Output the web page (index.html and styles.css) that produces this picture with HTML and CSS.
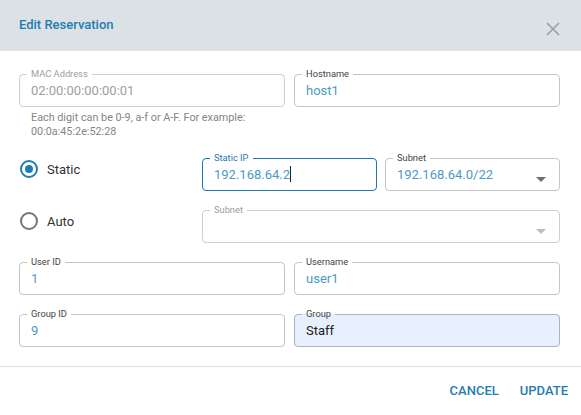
FILE: index.html
```html
<!DOCTYPE html>
<html lang="en">
<head>
  <meta charset="UTF-8">
  <meta name="viewport" content="width=device-width, initial-scale=1.0">
  <title>Edit Reservation</title>
  <link rel="stylesheet" href="styles.css">
</head>
<body>

  <div class="dialog">
    <header class="dialog-header">
      <h2>Edit Reservation</h2>
      <button class="close" aria-label="Close">
        <svg width="14" height="14" viewBox="0 0 14 14">
          <path d="M1 1 L13 13 M13 1 L1 13" stroke="#9a9ea2" stroke-width="1.6" fill="none"/>
        </svg>
      </button>
    </header>

    <div class="dialog-body">
      <!-- MAC / Hostname -->
      <div class="row two">
        <div>
          <fieldset class="field disabled">
            <legend>MAC Address</legend>
            <div class="value">02:00:00:00:00:01</div>
          </fieldset>
          <p class="hint">Each digit can be 0-9, a-f or A-F. For example:<br>00:0a:45:2e:52:28</p>
        </div>
        <fieldset class="field">
          <legend>Hostname</legend>
          <div class="value">host1</div>
        </fieldset>
      </div>

      <!-- Static / Auto -->
      <div class="row three">
        <label class="radio">
          <span class="ring checked"></span>
          Static
        </label>
        <fieldset class="field focused">
          <legend>Static IP</legend>
          <div class="value">192.168.64.2<span class="caret"></span></div>
        </fieldset>
        <fieldset class="field select">
          <legend>Subnet</legend>
          <div class="value">192.168.64.0/22</div>
          <span class="arrow"></span>
        </fieldset>

        <label class="radio">
          <span class="ring"></span>
          Auto
        </label>
        <fieldset class="field select disabled wide">
          <legend>Subnet</legend>
          <div class="value"></div>
          <span class="arrow"></span>
        </fieldset>
      </div>

      <!-- User / Group -->
      <div class="row two">
        <fieldset class="field">
          <legend>User ID</legend>
          <div class="value">1</div>
        </fieldset>
        <fieldset class="field">
          <legend>Username</legend>
          <div class="value">user1</div>
        </fieldset>
        <fieldset class="field">
          <legend>Group ID</legend>
          <div class="value">9</div>
        </fieldset>
        <fieldset class="field filled">
          <legend>Group</legend>
          <div class="value">Staff</div>
        </fieldset>
      </div>
    </div>

    <footer class="dialog-footer">
      <button class="text-btn">Cancel</button>
      <button class="text-btn">Update</button>
    </footer>
  </div>

</body>
</html>
```

FILE: styles.css
```css
* {
  margin: 0;
  padding: 0;
  box-sizing: border-box;
}

body {
  font-family: Roboto, "Liberation Sans", Arial, sans-serif;
  background-color: #fff;
  color: #333;
}

.dialog {
  width: 581px;
  height: 415px;
  background: #fff;
}

/* Header */
.dialog-header {
  height: 51px;
  background-color: #dce1e5;
  display: flex;
  align-items: center;
  justify-content: space-between;
  padding: 0 19px;
}

.dialog-header h2 {
  font-size: 13px;
  font-weight: 500;
  color: #1f7db3;
  margin-top: -2px;
}

.close {
  background: none;
  border: none;
  width: 14px;
  height: 14px;
  margin-right: 2px;
  margin-top: 6px;
  cursor: pointer;
}

/* Body */
.dialog-body {
  padding: 18px 21px 19px 19px;
  display: flex;
  flex-direction: column;
  gap: 14px;
}

.row {
  display: grid;
  column-gap: 9px;
  row-gap: 14px;
}

.row.two {
  grid-template-columns: 1fr 1fr;
  align-items: start;
}

.row.three {
  grid-template-columns: 175px 1fr 1fr;
  column-gap: 8px;
}

/* Outlined fields */
.field {
  position: relative;
  border: 1px solid #c4c4c4;
  border-radius: 4px;
  padding: 0 7px;
  min-width: 0;
  height: 38px;
}

.field legend {
  font-size: 9.3px;
  line-height: 10px;
  padding: 0 4px;
  color: #444;
}

.field .value {
  height: 27px;
  line-height: 24px;
  padding-left: 4px;
  font-size: 13px;
  color: #4b9ac6;
  white-space: nowrap;
}

.field.disabled {
  border-color: #cfcfcf;
}

.field.disabled legend {
  color: #9e9e9e;
}

.field.disabled .value {
  color: #9e9e9e;
}

.field.focused {
  border-color: #1f78ad;
}

.field.focused legend {
  color: #1f78ad;
}

.caret {
  display: inline-block;
  width: 1px;
  height: 16px;
  background: #222;
  vertical-align: -3px;
}

.field.filled {
  background-color: #e8f0fe;
  border-color: #a8b4c4;
}

.field.filled .value {
  color: #222;
}

.field.wide {
  grid-column: 2 / 4;
}

.arrow {
  position: absolute;
  right: 13px;
  top: 14px;
  width: 0;
  height: 0;
  border-left: 5px solid transparent;
  border-right: 5px solid transparent;
  border-top: 5px solid #6f6f6f;
}

.field.disabled .arrow {
  border-top-color: #bdbdbd;
}

.hint {
  font-size: 10.8px;
  line-height: 14px;
  color: #858585;
  padding-left: 12px;
  margin-top: 4px;
}

/* Radios */
.radio {
  display: flex;
  align-items: center;
  gap: 9px;
  font-size: 13px;
  color: #333;
  height: 18px;
  margin-top: 7px;
  padding-left: 1px;
}

.ring {
  width: 18px;
  height: 18px;
  border: 2px solid #757575;
  border-radius: 50%;
  display: flex;
  align-items: center;
  justify-content: center;
}

.ring.checked {
  border-color: #1f7db3;
}

.ring.checked::after {
  content: "";
  width: 8px;
  height: 8px;
  border-radius: 50%;
  background: #1f7db3;
}

/* Footer */
.dialog-footer {
  border-top: 1px solid #e0e0e0;
  height: 49px;
  display: flex;
  justify-content: flex-end;
  align-items: center;
  gap: 21px;
  padding: 0 13px 2px;
}

.text-btn {
  background: none;
  border: none;
  font-family: inherit;
  font-size: 13px;
  font-weight: 500;
  text-transform: uppercase;
  color: #1f7db3;
  cursor: pointer;
}
```
